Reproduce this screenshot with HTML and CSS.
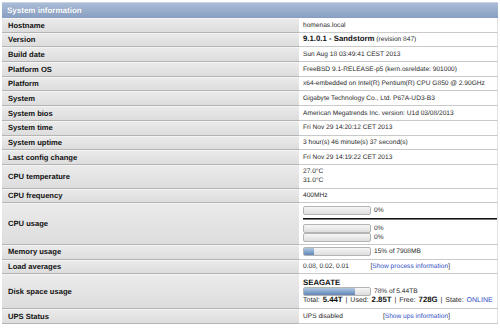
FILE: index.html
```html
<!DOCTYPE html>
<html>
	<head>
		<meta charset="utf-8">
		<title>System information</title>
		<link rel="stylesheet" href="styles.css">
	</head>
	<body>
	<table class="sysinfo">
		<colgroup><col class="label-col"><col></colgroup>
		<thead>
			<tr><th colspan="2" class="title">System information</th></tr>
		</thead>
		<tbody>
			<tr><td class="label">Hostname</td><td class="value">homenas.local</td></tr>
			<tr><td class="label">Version</td><td class="value"><b>9.1.0.1 - Sandstorm</b> (revision 847)</td></tr>
			<tr><td class="label">Build date</td><td class="value">Sun Aug 18 03:49:41 CEST 2013</td></tr>
			<tr><td class="label">Platform OS</td><td class="value">FreeBSD 9.1-RELEASE-p5 (kern.osreldate: 901000)</td></tr>
			<tr><td class="label">Platform</td><td class="value">x64-embedded on Intel(R) Pentium(R) CPU G850 @ 2.90GHz</td></tr>
			<tr><td class="label">System</td><td class="value">Gigabyte Technology Co., Ltd. P67A-UD3-B3</td></tr>
			<tr><td class="label">System bios</td><td class="value">American Megatrends Inc. version: U1d 03/08/2013</td></tr>
			<tr><td class="label">System time</td><td class="value">Fri Nov 29 14:20:12 CET 2013</td></tr>
			<tr><td class="label">System uptime</td><td class="value">3 hour(s) 46 minute(s) 37 second(s)</td></tr>
			<tr><td class="label">Last config change</td><td class="value">Fri Nov 29 14:19:22 CET 2013</td></tr>
			<tr><td class="label">CPU temperature</td><td class="value">27.0°C<br>31.0°C</td></tr>
			<tr><td class="label">CPU frequency</td><td class="value">400MHz</td></tr>
			<tr>
				<td class="label">CPU usage</td>
				<td class="value">
					<div class="meter-line"><span class="bar"><span class="fill" style="width:0%"></span></span><span class="pct">0%</span></div>
					<div class="cpu-sep"></div>
					<div class="meter-line"><span class="bar"><span class="fill" style="width:0%"></span></span><span class="pct">0%</span></div>
					<div class="meter-line"><span class="bar"><span class="fill" style="width:0%"></span></span><span class="pct">0%</span></div>
				</td>
			</tr>
			<tr>
				<td class="label">Memory usage</td>
				<td class="value"><div class="meter-line"><span class="bar"><span class="fill" style="width:15%"></span></span><span class="pct">15% of 7908MB</span></div></td>
			</tr>
			<tr>
				<td class="label">Load averages</td>
				<td class="value"><div class="split"><span>0.08, 0.02, 0.01</span><span>[<a href="#">Show process information</a>]</span></div></td>
			</tr>
			<tr>
				<td class="label">Disk space usage</td>
				<td class="value disk">
					<div class="disk-name">SEAGATE</div>
					<div class="meter-line"><span class="bar"><span class="fill" style="width:78%"></span></span><span class="pct">78% of 5.44TB</span></div>
					<div class="disk-stats">Total: <b>5.44T</b> | Used: <b>2.85T</b> | Free: <b>728G</b> | State: <a href="#">ONLINE</a></div>
				</td>
			</tr>
			<tr>
				<td class="label">UPS Status</td>
				<td class="value"><div class="split"><span>UPS disabled</span><span>[<a href="#">Show ups information</a>]</span></div></td>
			</tr>
		</tbody>
	</table>
	</body>
</html>
```

FILE: styles.css
```css
body {
	margin: 0;
	padding: 2px 2px 0 2px;
	background: #fff;
	color: #222;
	font: 7.1px/9px "Liberation Sans", Arial, sans-serif;
	text-rendering: geometricPrecision;
}

.sysinfo {
	width: 496px;
	border-collapse: separate;
	border-spacing: 0;
	table-layout: fixed;
	font: inherit;
}
.sysinfo col.label-col { width: 297px; }

/* blue title bar */
.title {
	height: 15px;
	padding: 0 5px;
	text-align: left;
	font-size: 8px;
	font-weight: bold;
	color: #fff;
	text-shadow: 0 0 1px #7a8fb0;
	background: linear-gradient(#aabcd6, #889fc2);
	border-top: 1px solid #c7d3e4;
}

.sysinfo td {
	padding: 2.5px 5px 2.2px 4px;
	vertical-align: middle;
	border-bottom: 1px solid #c9c9c9;
	white-space: nowrap;
}

.sysinfo td.label {
	padding-left: 6px;
	font-size: 7.6px;
	font-weight: bold;
	color: #111;
	background: linear-gradient(#ebebeb, #dddddd);
	border-bottom-color: #b4b4b4;
	box-shadow: inset 0 1px #f4f4f4;
}

.sysinfo td.value {
	font-size: 6.6px;
	color: #2a2a2a;
	background: #fff;
	border-right: 1px solid #e2e2e2;
}
/* bold bits are wider in the original face; keep them out of the line height */
.sysinfo td.value b { font-size: 7.8px; line-height: 0; color: #111; }

a { color: #3350c8; text-decoration: none; }

/* progress meters */
.meter-line {
	display: flex;
	align-items: center;
	height: 9px;
}
.bar {
	display: inline-block;
	box-sizing: border-box;
	width: 68px;
	height: 9px;
	border: 1px solid #b4b4b4;
	border-radius: 2px;
	background: linear-gradient(#f6f6f6, #dedede);
	overflow: hidden;
}
.fill {
	display: block;
	height: 100%;
	background: linear-gradient(#b3c8e0, #5d86b8);
}
.pct { margin-left: 3px; }

.cpu-sep {
	margin: 3.5px -5px 3.5px 0;
	border-top: 1px solid #111;
	border-bottom: 1px solid #777;
}

.split {
	display: flex;
	justify-content: space-between;
	width: 147px;
}

.sysinfo td.disk { padding: 4px 5px 2.7px 4px; }
.disk-name { font-weight: bold; font-size: 7.8px; line-height: 9px; color: #111; }
.disk-stats { font-size: 7px; line-height: 9px; word-spacing: 1px; }
```
